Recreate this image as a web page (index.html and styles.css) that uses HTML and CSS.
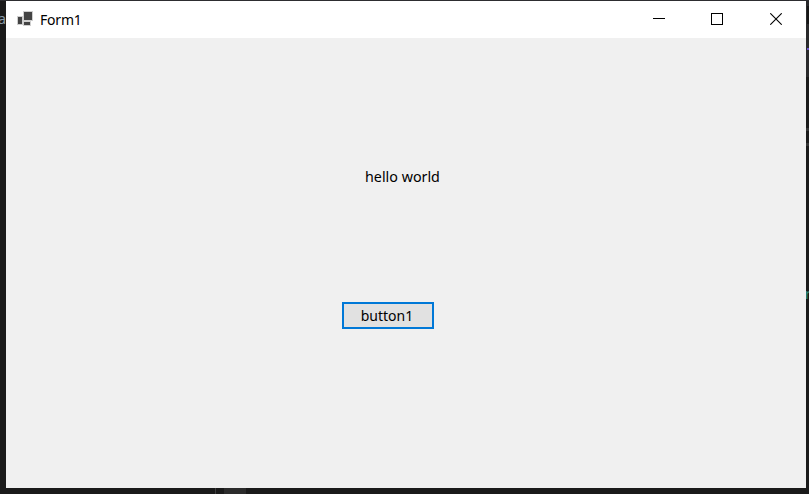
FILE: index.html
```html
<!DOCTYPE html>
<html lang="en">
<head>
<meta charset="utf-8">
<title>Form1</title>
<link rel="stylesheet" href="styles.css">
</head>
<body>
<div class="desktop">
  <span class="edge-letter edge-left">a</span>
  <span class="edge-letter edge-right">r</span>
  <span class="panel panel-top"></span>
  <span class="panel panel-accent"></span>
  <span class="panel panel-lower"></span>
  <span class="panel panel-line"></span>
  <span class="panel panel-line second"></span>
  <span class="panel panel-divider"></span>
  <span class="panel panel-tab"></span>
  <span class="panel speck-one"></span>
  <span class="panel speck-two"></span>
</div>
<main class="window">
  <header class="titlebar">
    <svg class="app-icon" width="18" height="17" viewBox="0 0 18 17" shape-rendering="crispEdges">
      <path fill="#cfcfcf" d="M6 1h10v10h-2v5H6v-1H0V6h6z"/>
      <path fill="#444" d="M7 2h8v8H7zM1 7h4v7H1zM7 12h6v3H7z"/>
    </svg>
    <h1 class="title">Form1</h1>
    <div class="controls">
      <svg class="minimize" width="12" height="12" viewBox="0 0 12 12" shape-rendering="crispEdges"><path d="M0 5.5h12"/></svg>
      <svg width="12" height="12" viewBox="0 0 12 12" shape-rendering="crispEdges"><path d="M.5.5h11v11H.5z"/></svg>
      <svg width="12" height="12" viewBox="0 0 12 12"><path d="M.3.3l11.4 11.4M11.7.3L.3 11.7"/></svg>
    </div>
  </header>
  <section class="form">
    <p class="label">hello world</p>
    <button class="button" type="button">button1</button>
  </section>
</main>
</body>
</html>
```

FILE: styles.css
```css
* { box-sizing: border-box; }
body {
  margin: 0;
  height: 494px;
  overflow: hidden;
  position: relative;
  background: #1a1a1a;
  font: 14.3px/20px "Noto Sans", sans-serif;
  color: #000;
}
.desktop { position: absolute; inset: 0; overflow: hidden; border-top: 1px solid #2d2d30; }
.edge-letter { position: absolute; line-height: 20px; }
.edge-left { left: -2px; top: 8px; color: #8a9aa6; }
.edge-right { left: 805px; top: 283px; color: #338b78; }
.panel { position: absolute; }
.panel-top { right: 0; top: 0; width: 3px; height: 76px; background: #29292b; }
.panel-accent { right: 0; top: 47px; width: 2px; height: 2px; background: #6a53c8; }
.panel-lower { right: 0; top: 5px; width: 2px; height: 18px; background: #161616; }
.panel-line { right: 0; top: 127px; width: 3px; height: 3px; background: #333; }
.second { top: 142px; }
.panel-divider { left: 215px; bottom: 0; width: 1px; height: 6px; background: #3d3d3d; }
.panel-tab { left: 224px; bottom: 0; width: 22px; height: 6px; background: #2b2b2b; }
.speck-one { left: 435px; top: -1px; width: 2px; height: 1px; background: #75665f; }
.speck-two { left: 444px; top: -1px; width: 2px; height: 1px; background: #62606b; }
.window {
  position: relative;
  width: 800px;
  height: 487px;
  margin: 0 0 0 6px;
  top: 1px;
  background: #f0f0f0;
}
.titlebar {
  display: flex;
  align-items: center;
  height: 37px;
  padding: 0 24px 0 11px;
  background: #fff;
}
.app-icon { display: block; margin-top: -2px; }
.title { margin: 1px 0 0 5px; font-size: 14px; font-weight: 400; letter-spacing: -0.2px; }
.controls { display: flex; gap: 47px; margin: -1px 0 0 auto; }
.controls svg { display: block; fill: none; stroke: #000; stroke-width: 1.1; }
.controls .minimize { margin-right: -1px; }
.form { display: flex; flex-direction: column; align-items: flex-start; }
.label { margin: 129px 0 0 359px; }
.button {
  width: 92px;
  height: 27px;
  margin: 115px 0 0 336px;
  padding: 0 2px 0 0;
  border: 2px solid #0078d7;
  background: #e1e1e1;
  font: inherit;
  font-size: 14px;
  color: #000;
}
```
